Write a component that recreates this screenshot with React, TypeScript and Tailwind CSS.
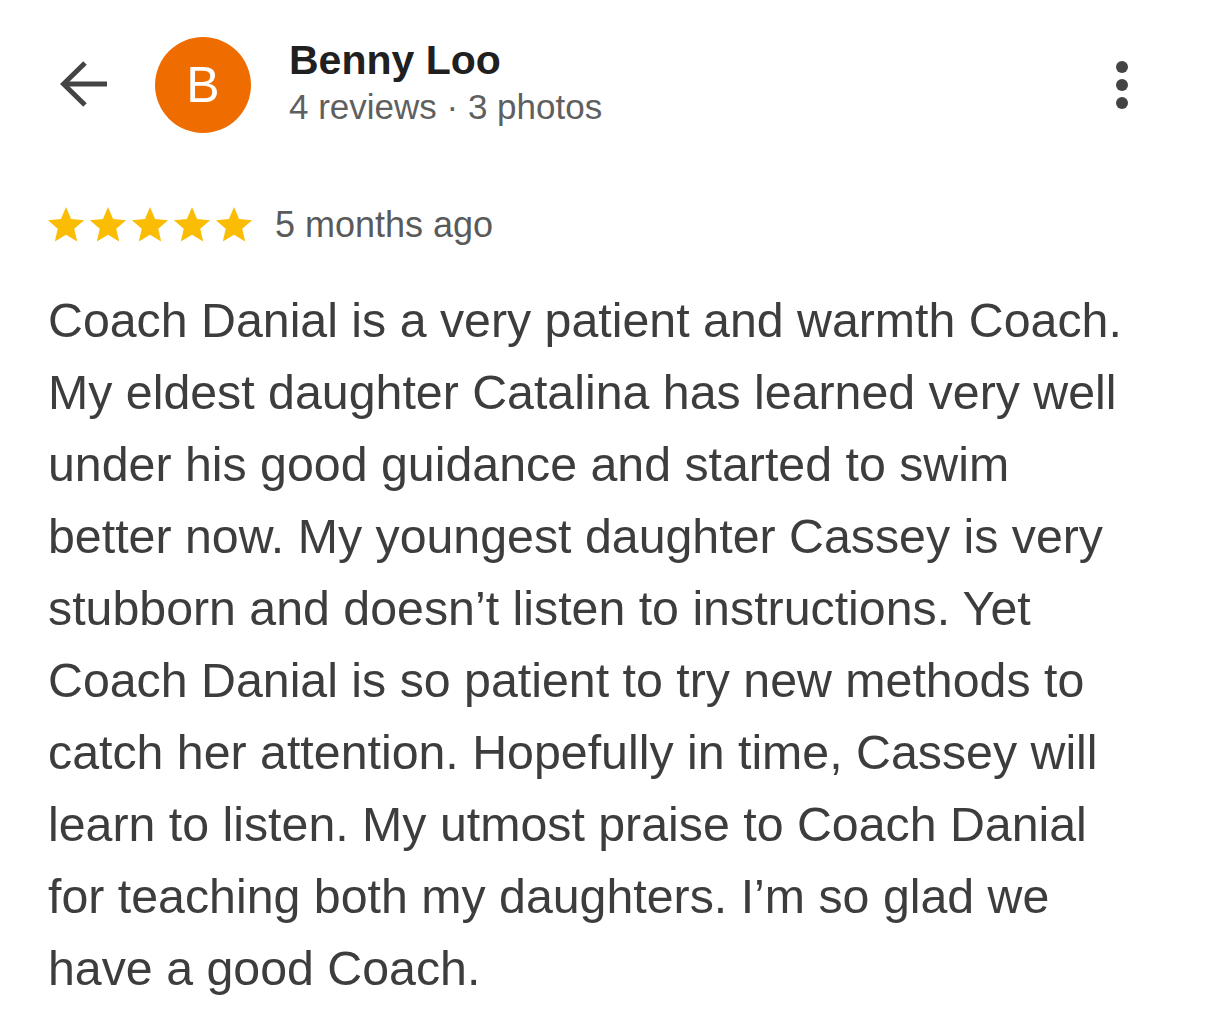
import React from "react";

const Star = () => (
  <svg width="40" height="38" viewBox="0 0 24 23" className="block">
    <path
      d="M12 0.6l3.09 7.26 7.86.69-5.96 5.18 1.78 7.69L12 17.33 5.23 21.42l1.78-7.69L1.05 8.55l7.86-.69L12 .6z"
      fill="#fbbc04"
    />
  </svg>
);

const lines = [
  "Coach Danial is a very patient and warmth Coach.",
  "My eldest daughter Catalina has learned very well",
  "under his good guidance and started to swim",
  "better now. My youngest daughter Cassey is very",
  "stubborn and doesn\u2019t listen to instructions. Yet",
  "Coach Danial is so patient to try new methods to",
  "catch her attention. Hopefully in time, Cassey will",
  "learn to listen. My utmost praise to Coach Danial",
  "for teaching both my daughters. I\u2019m so glad we",
  "have a good Coach.",
];

export default function App() {
  return (
    <div className="w-[1206px] h-[1014px] bg-white overflow-hidden font-['Liberation_Sans',Arial,sans-serif]">
      {/* Header */}
      <div className="flex items-start pt-[36px] pl-[60px] pr-[78px]">
        <button className="mt-[25px] w-[48px] h-[46px] flex items-center justify-center">
          <svg width="48" height="46" viewBox="0 0 48 46" fill="none">
            <path d="M47 23H4" stroke="#444" strokeWidth="5" />
            <path d="M25 2L3.5 23L25 44" stroke="#444" strokeWidth="5" strokeLinejoin="miter" />
          </svg>
        </button>
        <div className="ml-[47px] mt-[1px] w-[96px] h-[96px] rounded-full bg-[#ef6c00] flex items-center justify-center text-white text-[50px] leading-none">
          B
        </div>
        <div className="ml-[38px] flex flex-col">
          <div className="text-[41px] leading-[48px] font-bold text-[#202020]">Benny Loo</div>
          <div className="mt-[3px] text-[35px] leading-[40px] text-[#5f5f5f]">
            4 reviews · 3 photos
          </div>
        </div>
        <div className="ml-auto mt-[25px] flex flex-col items-center gap-[6px]">
          <span className="block w-[12px] h-[12px] rounded-full bg-[#444]" />
          <span className="block w-[12px] h-[12px] rounded-full bg-[#444]" />
          <span className="block w-[12px] h-[12px] rounded-full bg-[#444]" />
        </div>
      </div>

      {/* Rating row */}
      <div className="flex items-center pl-[46px] mt-[72px] h-[40px]">
        <div className="flex gap-[2px]">
          <Star />
          <Star />
          <Star />
          <Star />
          <Star />
        </div>
        <div className="ml-[21px] text-[36px] leading-[40px] text-[#5a5a5a]">5 months ago</div>
      </div>

      {/* Body */}
      <p className="pl-[48px] mt-[39px] text-[48.3px] leading-[72px] text-[#3d3d3d] whitespace-nowrap">
        {lines.map((l, i) => (
          <React.Fragment key={i}>
            {l}
            {i < lines.length - 1 && <br />}
          </React.Fragment>
        ))}
      </p>
    </div>
  );
}
